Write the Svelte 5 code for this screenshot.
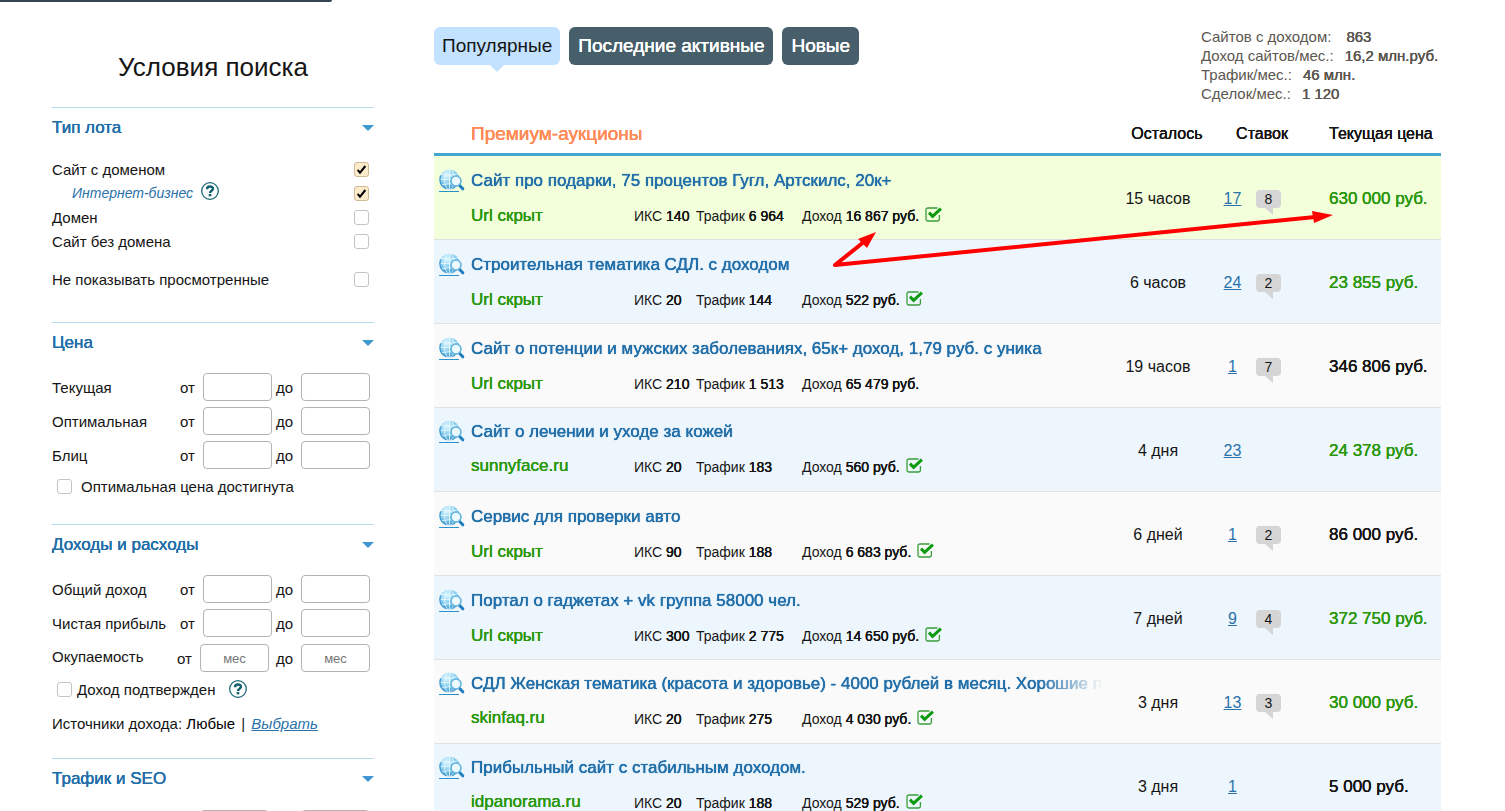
<script>
  const lotTypes = [
    { id: 'with-domain', label: 'Сайт с доменом', checked: true },
    { id: 'business', label: 'Интернет-бизнес', checked: true, sub: true },
    { id: 'domain', label: 'Домен', checked: false },
    { id: 'no-domain', label: 'Сайт без домена', checked: false },
    { id: 'hide-seen', label: 'Не показывать просмотренные', checked: false, apart: true }
  ];
  const prices = [
    { id: 'current', label: 'Текущая' },
    { id: 'optimal', label: 'Оптимальная' },
    { id: 'blitz', label: 'Блиц' }
  ];
  const incomes = [
    { id: 'total', label: 'Общий доход' },
    { id: 'net', label: 'Чистая прибыль' },
    { id: 'payback', label: 'Окупаемость', unit: 'мес' }
  ];
  const totals = [
    ['Сайтов с доходом:', '863'],
    ['Доход сайтов/мес.:', '16,2 млн.руб.'],
    ['Трафик/мес.:', '46 млн.'],
    ['Сделок/мес.:', '1 120']
  ];
  const lots = [
    { title: 'Сайт про подарки, 75 процентов Гугл, Артскилс, 20к+', iks: '140', traffic: '6 964', income: '16 867', ok: true, left: '15 часов', bids: 17, notes: 8, price: '630 000', met: true },
    { title: 'Строительная тематика СДЛ. с доходом', iks: '20', traffic: '144', income: '522', ok: true, left: '6 часов', bids: 24, notes: 2, price: '23 855', met: true },
    { title: 'Сайт о потенции и мужских заболеваниях, 65к+ доход, 1,79 руб. с уника', iks: '210', traffic: '1 513', income: '65 479', left: '19 часов', bids: 1, notes: 7, price: '346 806' },
    { title: 'Сайт о лечении и уходе за кожей', url: 'sunnyface.ru', iks: '20', traffic: '183', income: '560', ok: true, left: '4 дня', bids: 23, price: '24 378', met: true },
    { title: 'Сервис для проверки авто', iks: '90', traffic: '188', income: '6 683', ok: true, left: '6 дней', bids: 1, notes: 2, price: '86 000' },
    { title: 'Портал о гаджетах + vk группа 58000 чел.', iks: '300', traffic: '2 775', income: '14 650', ok: true, left: '7 дней', bids: 9, notes: 4, price: '372 750', met: true },
    { title: 'СДЛ Женская тематика (красота и здоровье) - 4000 рублей в месяц. Хорошие показатели', url: 'skinfaq.ru', iks: '20', traffic: '275', income: '4 030', ok: true, left: '3 дня', bids: 13, notes: 3, price: '30 000', met: true },
    { title: 'Прибыльный сайт с стабильным доходом.', url: 'idpanorama.ru', iks: '20', traffic: '188', income: '529', ok: true, left: '3 дня', bids: 1, price: '5 000' }
  ];
</script>

{#snippet help()}
  <svg class="help" viewBox="0 0 18 18" aria-hidden="true">
    <circle cx="9" cy="9" r="8.3" fill="#fff" stroke="#1c6878" stroke-width="1.3" />
    <path d="M6 7.2C6 3.6 12 3.7 12 6.8C12 8.7 9 8.7 9 10.9" fill="none" stroke="#12606f" stroke-width="2.4" />
    <rect x="7.7" y="12" width="2.6" height="2.3" fill="#12606f" />
  </svg>
{/snippet}

{#snippet heading(text)}
  <h2><button type="button">{text}<span class="caret"></span></button></h2>
{/snippet}

{#snippet range(row)}
  <div class="range" class:unit={row.unit !== undefined}>
    <span class="name">{row.label}</span>
    <label for="{row.id}-from">от</label>
    <input id="{row.id}-from" type="text" placeholder={row.unit} />
    <label class="to" for="{row.id}-to">до</label>
    <input id="{row.id}-to" type="text" placeholder={row.unit} />
  </div>
{/snippet}

<svg width="0" height="0" class="defs" aria-hidden="true">
  <defs>
    <radialGradient id="globe" cx="38%" cy="28%" r="78%">
      <stop offset="0" stop-color="#d8f5ff" />
      <stop offset=".55" stop-color="#85cdee" />
      <stop offset="1" stop-color="#2d8dc9" />
    </radialGradient>
  </defs>
</svg>

<div class="strip"></div>
<div class="page">
  <aside>
    <h1>Условия поиска</h1>
    <section>
      {@render heading('Тип лота')}
      <div class="types">
        {#each lotTypes as t}
          <div class="type" class:apart={t.apart}>
            <label for={t.id} class:sub={t.sub}>{t.label}</label>
            {#if t.sub}{@render help()}{/if}
            <input id={t.id} type="checkbox" checked={t.checked} />
          </div>
        {/each}
      </div>
    </section>
    <section>
      {@render heading('Цена')}
      <div class="ranges">
        {#each prices as p}{@render range(p)}{/each}
      </div>
      <div class="tick wide">
        <input id="optimal-met" type="checkbox" />
        <label for="optimal-met">Оптимальная цена достигнута</label>
      </div>
    </section>
    <section>
      {@render heading('Доходы и расходы')}
      <div class="ranges">
        {#each incomes as p}{@render range(p)}{/each}
      </div>
      <div class="tick">
        <input id="confirmed" type="checkbox" />
        <label for="confirmed">Доход подтвержден</label>
        {@render help()}
      </div>
      <p class="sources">Источники дохода: <span>Любые</span> | <a href="#sources">Выбрать</a></p>
    </section>
    <section>
      {@render heading('Трафик и SEO')}
      <div class="ranges">
        {@render range({ id: 'visits', label: 'Трафик', unit: '' })}
      </div>
    </section>
  </aside>

  <main>
    <header>
      <nav>
        <button type="button" class="active">Популярные</button>
        <button type="button">Последние активные</button>
        <button type="button">Новые</button>
      </nav>
      <ul class="totals">
        {#each totals as [name, value], i}
          <li class:first={i === 0}>{name}<b>{value}</b></li>
        {/each}
      </ul>
    </header>

    <table>
      <colgroup>
        <col />
        <col class="c-left" />
        <col class="c-bids" />
        <col class="c-notes" />
        <col class="c-price" />
      </colgroup>
      <thead>
        <tr>
          <th class="premium">Премиум-аукционы</th>
          <th class="left">Осталось</th>
          <th colspan="2">Ставок</th>
          <th class="price">Текущая цена</th>
        </tr>
      </thead>
      <tbody>
        {#each lots as lot}
          <tr>
            <td>
              <div class="lot" class:open={lot.url}>
                <a class="globe" href="#preview" aria-label="Просмотр">
                  <svg viewBox="0 0 26 24" aria-hidden="true">
                    <circle cx="10.5" cy="10.5" r="10" fill="url(#globe)" />
                    <g fill="none" stroke="#effbff" stroke-width=".9" opacity=".85">
                      <path d="M10.5 .5V20.5M.5 10.5H20.5M2.5 5Q10.5 8 18.5 5M2.5 16Q10.5 13 18.5 16" />
                      <ellipse cx="10.5" cy="10.5" rx="5" ry="10" />
                    </g>
                    <path d="M1.6 6.5C0 12 2 17 6.5 19.6" fill="none" stroke="#3e98cf" stroke-width="1.2" />
                    <path d="M20.4 16.2L23.8 19.8" stroke="#1f7fbd" stroke-width="3" stroke-linecap="round" />
                    <circle cx="17" cy="12" r="5" fill="#ecf9ff" stroke="#66b5df" stroke-width="1.6" />
                    <path d="M0 22.5H20" stroke="#2b90c9" />
                  </svg>
                </a>
                <a class="title" href="#lot">{lot.title}</a>
                <div class="facts">
                  <span class="url">{lot.url ?? 'Url скрыт'}</span>
                  <span class="iks">ИКС <b>{lot.iks}</b></span>
                  <span class="traffic">Трафик <b>{lot.traffic}</b></span>
                  <span class="income">Доход <b>{lot.income} руб.</b></span>
                  {#if lot.ok}
                    <svg class="ok" viewBox="0 0 17 15" aria-hidden="true">
                      <path d="M12.5 1H2.8A1.8 1.8 0 0 0 1 2.8V12.2A1.8 1.8 0 0 0 2.8 14H12.6A1.8 1.8 0 0 0 14.4 12.2V8" fill="none" stroke="#3a9d3c" stroke-width="1.3" />
                      <path d="M4 5.6L7.6 9.4L15.9 1.6" fill="none" stroke="#0d9a10" stroke-width="3" />
                    </svg>
                  {/if}
                </div>
              </div>
            </td>
            <td class="mid">{lot.left}</td>
            <td class="mid"><a class="bids" href="#bids">{lot.bids}</a></td>
            <td>{#if lot.notes}<span class="note">{lot.notes}</span>{/if}</td>
            <td class="price" class:met={lot.met}>{lot.price} руб.</td>
          </tr>
        {/each}
      </tbody>
    </table>

    <svg class="arrows" width="510" height="50" viewBox="0 0 510 50" aria-hidden="true">
      <g fill="#f00">
        <path d="M47 4L29 11L38 20Z" />
        <path d="M504 -13L483 -17L485 -5Z" />
      </g>
      <path d="M36 13L6 37L486 -11" fill="none" stroke="#f00" stroke-width="4" stroke-linejoin="round" />
    </svg>
  </main>
</div>

<style>
  :global(body) {
    background: #fff;
    color: #151515;
    font-family: 'Liberation Sans', Arial, sans-serif;
    font-size: 15px;
  }
  a { color: #2a72ab; }
  b, th, h2, .url, td.price, nav button {
    font-weight: 400;
    text-shadow: 0 0 0 currentColor, 0 0 0 currentColor;
  }
  input, button { font: inherit; color: inherit; }
  .defs { position: absolute; }
  .strip {
    width: 332px;
    height: 2px;
    background: #34434f;
    border-bottom-right-radius: 4px;
  }
  .page {
    display: grid;
    grid-template-columns: 322px minmax(0, 1fr);
    column-gap: 60px;
    padding: 0 64px 0 52px;
  }

  h1 {
    margin: 0;
    padding: 45px 0 20px;
    font-size: 26px;
    line-height: 40px;
    font-weight: 400;
    text-align: center;
  }
  section { border-top: 1px solid #b5dcee; padding-bottom: 31px; }
  section + section { padding-bottom: 26px; }
  section + section + section { padding-bottom: 22px; }
  h2 { margin: 0; font-size: 17px; color: #226fa9; }
  h2 button {
    display: flex;
    align-items: center;
    justify-content: space-between;
    width: 100%;
    height: 40px;
    padding: 0;
    border: 0;
    background: none;
    text-shadow: inherit;
  }
  .caret {
    border: 6px solid transparent;
    border-top-color: #3d98d2;
    border-bottom: 0;
  }
  .types { padding: 9px 5px 0 0; }
  .type { display: flex; align-items: center; height: 24px; }
  .type.apart { margin-top: 14px; }
  .sub {
    padding-left: 20px;
    font-size: 14px;
    font-style: italic;
    color: #2a72ab;
  }
  input[type='checkbox'] {
    appearance: none;
    box-sizing: border-box;
    width: 15px;
    height: 15px;
    margin: 0;
    border: 1px solid #c4c4c4;
    border-radius: 3px;
    background: #fff;
  }
  .type input[type='checkbox'] { margin-left: auto; }
  input[type='checkbox']:checked {
    border-color: #cdbb95;
    background: #fdeccb url("data:image/svg+xml,%3Csvg xmlns='http://www.w3.org/2000/svg' viewBox='0 0 13 13'%3E%3Cpath d='M2.6 6.8L5 9.6L10.4 3' fill='none' stroke='%23000' stroke-width='2'/%3E%3C/svg%3E");
  }
  .help { width: 18px; height: 18px; margin: 0 0 4px 8px; overflow: visible; }
  .ranges {
    display: grid;
    gap: 6px;
    padding: 10px 4px 0 0;
  }
  .range { display: flex; align-items: center; height: 28px; }
  .range .name { flex: 1; }
  .range label { width: 23px; }
  .range .to { box-sizing: border-box; width: 29px; padding-left: 4px; }
  .range input {
    box-sizing: border-box;
    width: 69px;
    height: 28px;
    padding: 0 4px;
    border: 1px solid #b3b3b3;
    border-radius: 4px;
    background: #fff;
    font-size: 13px;
    text-align: center;
  }
  .range.unit { margin-top: 1px; }
  .range.unit:not(:only-child) .name { padding-bottom: 4px; }
  .range.unit label + input:not(:last-child) { margin-right: 3px; }
  .tick {
    display: flex;
    align-items: center;
    gap: 5px;
    height: 24px;
    padding: 5px 0 0 5px;
  }
  .tick.wide { gap: 9px; }
  .tick .help { margin: 0 0 0 9px; }
  .sources { margin: 11px 0 0; line-height: 24px; }
  .sources span { margin-right: 2px; color: #000; }
  .sources a { margin-left: 2px; font-style: italic; }

  main { position: relative; }
  header {
    display: flex;
    justify-content: space-between;
    align-items: flex-start;
    padding-top: 25px;
  }
  nav { display: flex; gap: 9px; }
  nav button {
    position: relative;
    height: 38px;
    padding: 0 9px;
    border: 0;
    border-radius: 6px;
    background: #465f6a;
    color: #fff;
    font-size: 19px;
  }
  nav .active {
    padding: 0 8px;
    background: #c3e2ff;
    color: #151515;
    text-shadow: none;
  }
  nav .active::after {
    content: '';
    position: absolute;
    top: 100%;
    left: 50%;
    margin-left: -7px;
    border: 7px solid transparent;
    border-top-color: #c3e2ff;
    border-bottom: 0;
  }
  .totals {
    width: 240px;
    margin: 0;
    padding: 0;
    list-style: none;
    line-height: 19px;
    color: #5c5751;
    white-space: nowrap;
  }
  .totals b { margin-left: 11px; }
  .totals .first b { margin-left: 15px; }

  table {
    width: 100%;
    table-layout: fixed;
    border-collapse: separate;
    border-spacing: 0;
  }
  .c-left { width: 110px; }
  .c-bids { width: 39px; }
  .c-notes { width: 59px; }
  .c-price { width: 130px; }
  th {
    height: 36px;
    padding: 13px 0 1px;
    border-bottom: 3px solid #43a7d3;
    font-size: 16px;
    text-align: center;
  }
  th.left { padding-left: 18px; }
  th.premium {
    padding-left: 37px;
    font-size: 19px;
    text-align: left;
    color: #ff8a56;
  }
  th.price, td.price { padding-left: 18px; text-align: left; }
  td {
    height: 81px;
    padding: 2px 0 0;
    border-bottom: 1px solid #dfe2e4;
    font-size: 16px;
  }
  td.price { font-size: 17px; }
  tbody tr { background: #fafafa; }
  tbody tr:nth-child(even) { background: #edf6fd; }
  tbody tr:first-child { background: #f3ffdb; }
  td.mid { text-align: center; }
  td.met { color: #2b980f; }
  .lot {
    display: grid;
    grid-template-columns: 32px minmax(0, 1fr);
    grid-template-rows: 24px 24px;
    row-gap: 11px;
    padding-left: 5px;
  }
  .lot.open { padding-bottom: 2px; }
  .globe { width: 26px; height: 24px; }
  .globe svg { display: block; width: 26px; height: 24px; }
  .title {
    overflow: hidden;
    line-height: 24px;
    font-size: 17px;
    white-space: nowrap;
    text-decoration: none;
    text-shadow: 0 0 0 currentColor, 0 0 1px currentColor;
    color: #226fa9;
    mask-image: linear-gradient(to left, transparent, #000 64px);
  }
  .facts {
    grid-column: 2;
    display: flex;
    align-items: center;
    font-size: 14px;
    white-space: nowrap;
  }
  .url { width: 163px; font-size: 17px; color: #2b980f; }
  .open .url { padding-bottom: 3px; }
  .iks { width: 62px; }
  .traffic { width: 106px; }
  .ok { width: 17px; height: 15px; margin: 0 0 4px 6px; }
  .note {
    position: relative;
    display: block;
    width: 25px;
    margin-left: 4px;
    border-radius: 4px;
    background: #d5d5d5;
    font-size: 14px;
    line-height: 18px;
    text-align: center;
  }
  .note::after {
    content: '';
    position: absolute;
    top: 100%;
    left: 9px;
    border-top: 7px solid #d5d5d5;
    border-left: 8px solid transparent;
  }
  .arrows {
    position: absolute;
    top: 226px;
    left: 395px;
    overflow: visible;
    pointer-events: none;
  }
</style>
